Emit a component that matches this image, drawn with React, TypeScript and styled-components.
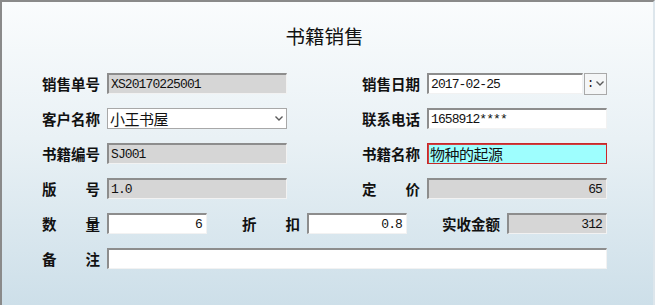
import React from "react";
import styled, { createGlobalStyle, css } from "styled-components";

const Global = createGlobalStyle`
  html, body { margin: 0; padding: 0; }
  body { font-family: "Noto Sans CJK SC", "Noto Sans", sans-serif; }
`;

const Window = styled.div`
  box-sizing: border-box;
  width: 655px;
  height: 305px;
  border-top: 2px solid #8a8a8a;
  border-left: 2px solid #8a8a8a;
  border-right: 2px solid #dde6ec;
  background: linear-gradient(180deg, #fafcfd 0%, #e9f1f5 45%, #cddfe9 100%);
  padding: 21px 0 0 40px;
  display: flex;
  flex-direction: column;
`;

const Title = styled.h1`
  margin: 0 0 24px 0;
  width: 565px;
  text-align: center;
  font-family: "Noto Sans CJK SC", sans-serif;
  font-weight: 400;
  font-size: 19.5px;
  line-height: 26px;
  color: #111;
`;

const Form = styled.div`
  display: flex;
  flex-direction: column;
  gap: 14px;
`;

const Row = styled.div<{ $gap: number }>`
  display: flex;
  align-items: center;
  gap: ${(p) => p.$gap}px;
  height: 21px;
`;

const Field = styled.div`
  display: flex;
  align-items: center;
  gap: 7px;
`;

const Label = styled.span<{ $spread?: boolean }>`
  width: 58px;
  font-family: "Noto Sans CJK SC", sans-serif;
  font-weight: 700;
  font-size: 14.5px;
  line-height: 21px;
  color: #111;
  white-space: nowrap;
  display: flex;
  justify-content: ${(p) => (p.$spread ? "space-between" : "flex-start")};
`;

type Tone = "white" | "gray" | "focus";

const Box = styled.div<{ $w: number; $tone?: Tone; $right?: boolean; $cjk?: boolean }>`
  box-sizing: border-box;
  width: ${(p) => p.$w}px;
  height: 21px;
  display: flex;
  align-items: center;
  justify-content: ${(p) => (p.$right ? "flex-end" : "flex-start")};
  padding: ${(p) => (p.$right ? "0 4px 0 0" : "0 0 0 2px")};
  border-style: solid;
  border-width: 2px 1px 1px 2px;
  border-color: #8d8d8d #f2f2f2 #f2f2f2 #8d8d8d;
  background: ${(p) => (p.$tone === "gray" ? "#d6d6d6" : p.$tone === "focus" ? "#9efefe" : "#ffffff")};
  ${(p) =>
    p.$tone === "focus" &&
    css`
      border-width: 1px;
      border-color: #c8282a;
      box-shadow: inset 1px 1px 0 #d04040;
    `}
  font-family: ${(p) => (p.$cjk ? `"Noto Sans CJK SC", sans-serif` : `"Liberation Mono", monospace`)};
  font-size: ${(p) => (p.$cjk ? "15px" : "13px")};
  letter-spacing: ${(p) => (p.$cjk ? "-0.5px" : "-0.9px")};
  color: #111;
  white-space: nowrap;
  overflow: hidden;
`;

const Select = styled(Box)`
  justify-content: space-between;
  padding-right: 3px;
  border-width: 1px;
  border-color: #a8a8a8;
`;

const DateWrap = styled.div`
  display: flex;
  align-items: center;
  gap: 1px;
`;

const DropBtn = styled.div`
  box-sizing: border-box;
  width: 23px;
  height: 22px;
  border: 1px solid #a9a9a9;
  background: #f4f6f7;
  display: flex;
  align-items: center;
  justify-content: center;
  gap: 2px;
  font-family: "Liberation Mono", monospace;
  font-size: 12px;
  color: #111;
`;

const Chevron = () => (
  <svg width="8" height="5" viewBox="0 0 8 5">
    <path d="M0.5 0.5 L4 4 L7.5 0.5" fill="none" stroke="#5a5a5a" strokeWidth="1.4" />
  </svg>
);

const Spread = ({ a, b }: { a: string; b: string }) => (
  <Label $spread>
    <span>{a}</span>
    <span>{b}</span>
  </Label>
);

export default function App() {
  return (
    <>
      <Global />
      <Window>
        <Title>书籍销售</Title>
        <Form>
          <Row $gap={75}>
            <Field>
              <Label>销售单号</Label>
              <Box $w={180} $tone="gray">XS20170225001</Box>
            </Field>
            <Field>
              <Label>销售日期</Label>
              <DateWrap>
                <Box $w={156}>2017-02-25</Box>
                <DropBtn>
                  <span>:</span>
                  <Chevron />
                </DropBtn>
              </DateWrap>
            </Field>
          </Row>
          <Row $gap={75}>
            <Field>
              <Label>客户名称</Label>
              <Select $w={180} $cjk>
                <span>小王书屋</span>
                <Chevron />
              </Select>
            </Field>
            <Field>
              <Label>联系电话</Label>
              <Box $w={180}>1658912****</Box>
            </Field>
          </Row>
          <Row $gap={75}>
            <Field>
              <Label>书籍编号</Label>
              <Box $w={180} $tone="gray">SJ001</Box>
            </Field>
            <Field>
              <Label>书籍名称</Label>
              <Box $w={180} $tone="focus" $cjk>物种的起源</Box>
            </Field>
          </Row>
          <Row $gap={75}>
            <Field>
              <Spread a="版" b="号" />
              <Box $w={180} $tone="gray">1.0</Box>
            </Field>
            <Field>
              <Spread a="定" b="价" />
              <Box $w={180} $tone="gray" $right>65</Box>
            </Field>
          </Row>
          <Row $gap={35}>
            <Field>
              <Spread a="数" b="量" />
              <Box $w={100} $right>6</Box>
            </Field>
            <Field>
              <Spread a="折" b="扣" />
              <Box $w={100} $right>0.8</Box>
            </Field>
            <Field>
              <Label>实收金额</Label>
              <Box $w={100} $tone="gray" $right>312</Box>
            </Field>
          </Row>
          <Row $gap={35}>
            <Field>
              <Spread a="备" b="注" />
              <Box $w={500}></Box>
            </Field>
          </Row>
        </Form>
      </Window>
    </>
  );
}
